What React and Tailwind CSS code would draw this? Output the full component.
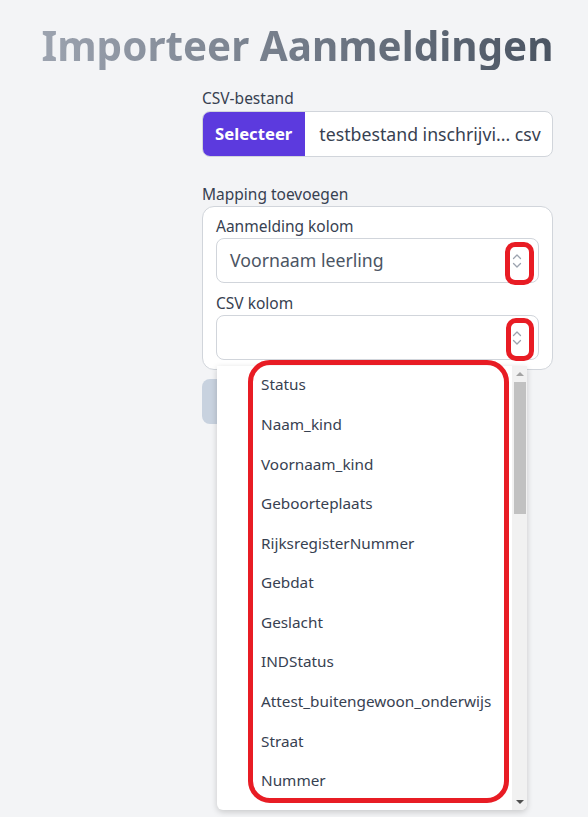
import React from "react";

function UpDown() {
  return (
    <svg width="10" height="16" viewBox="0 0 10 16" fill="none" stroke="#9ca3af" strokeWidth="1.3" strokeLinecap="round" strokeLinejoin="round">
      <path d="M1.5 5.5 L5 2 L8.5 5.5" />
      <path d="M1.5 10.5 L5 14 L8.5 10.5" />
    </svg>
  );
}

const items = [
  "Status",
  "Naam_kind",
  "Voornaam_kind",
  "Geboorteplaats",
  "RijksregisterNummer",
  "Gebdat",
  "Geslacht",
  "INDStatus",
  "Attest_buitengewoon_onderwijs",
  "Straat",
  "Nummer",
];

export default function App() {
  return (
    <div className="min-h-[817px] w-[588px] bg-[#f3f4f6] relative overflow-hidden" style={{ fontFamily: '"Noto Sans", "Open Sans", sans-serif' }}>
      <div className="pt-[22px] flex justify-center pl-[7px]">
        <h1 className="whitespace-nowrap text-[40.4px] leading-[48px] font-bold bg-gradient-to-r from-[#9ca3af] to-[#4b5563] bg-clip-text text-transparent">
          Importeer Aanmeldingen
        </h1>
      </div>
      <div className="pl-[202px] pr-[35px] mt-[18px]">
        <div className="text-[15.5px] leading-[20px] text-[#374151]">CSV-bestand</div>
        <div className="mt-[3px] flex h-[46px] rounded-lg border border-[#d1d5db] bg-white overflow-hidden">
          <div className="bg-[#5c3ade] text-white font-bold text-[16.7px] flex items-center px-[13px] -my-px -ml-px">Selecteer</div>
          <div className="flex items-center pl-[14px] text-[17.7px] text-[#374151] whitespace-nowrap">testbestand inschrijvi... csv</div>
        </div>
        <div className="mt-[27px] text-[15.5px] leading-[20px] text-[#374151]">Mapping toevoegen</div>
        <div className="mt-[2px] rounded-xl border border-[#d1d5db] bg-white px-[13px] pt-[9px] pb-[9px] relative">
          <div className="text-[15.5px] leading-[20px] text-[#374151]">Aanmelding kolom</div>
          <div className="mt-[2px] h-[45px] rounded-lg border border-[#d1d5db] flex items-center justify-between pl-[13px] pr-[16px]">
            <span className="text-[17.7px] text-[#4b5563]">Voornaam leerling</span>
            <UpDown />
          </div>
          <div className="mt-[10px] text-[15.5px] leading-[20px] text-[#374151]">CSV kolom</div>
          <div className="mt-[2px] h-[45px] rounded-lg border border-[#d1d5db] flex items-center justify-end pr-[16px] relative">
            <UpDown />
          </div>
        </div>
        <div className="mt-[9px] h-[45px] w-[200px] rounded-lg bg-[#c8d2df]"></div>
      </div>

      {/* dropdown */}
      <div className="absolute left-[217px] top-[366px] w-[310px] h-[444px] bg-white rounded-b-md shadow-[0_2px_6px_rgba(0,0,0,0.18)] flex overflow-hidden">
        <div className="flex-1 -mt-[1px]">
          {items.map((t) => (
            <div key={t} className="h-[39.6px] flex items-center pl-[44px] text-[15.3px] text-[#374151] whitespace-nowrap">{t}</div>
          ))}
        </div>
        <div className="w-[15px] bg-[#f1f1f1] flex flex-col items-center">
          <div className="h-[16px] flex items-center justify-center">
            <div className="w-0 h-0 border-l-[4px] border-r-[4px] border-b-[4px] border-l-transparent border-r-transparent border-b-[#a3a3a3]"></div>
          </div>
          <div className="w-[12px] h-[132px] bg-[#c1c1c1]"></div>
          <div className="flex-1"></div>
          <div className="h-[16px] flex items-center justify-center">
            <div className="w-0 h-0 border-l-[4px] border-r-[4px] border-t-[4px] border-l-transparent border-r-transparent border-t-[#505050]"></div>
          </div>
        </div>
      </div>

      {/* red highlights */}
      <div className="absolute left-[505px] top-[242px] w-[29px] h-[43px] border-[5px] border-[#e81c24] rounded-[10px]"></div>
      <div className="absolute left-[506px] top-[318px] w-[28px] h-[43px] border-[5px] border-[#e81c24] rounded-[10px]"></div>
      <div className="absolute left-[248px] top-[360px] w-[261px] h-[443px] border-[5px] border-[#e81c24] rounded-[22px]"></div>
    </div>
  );
}
